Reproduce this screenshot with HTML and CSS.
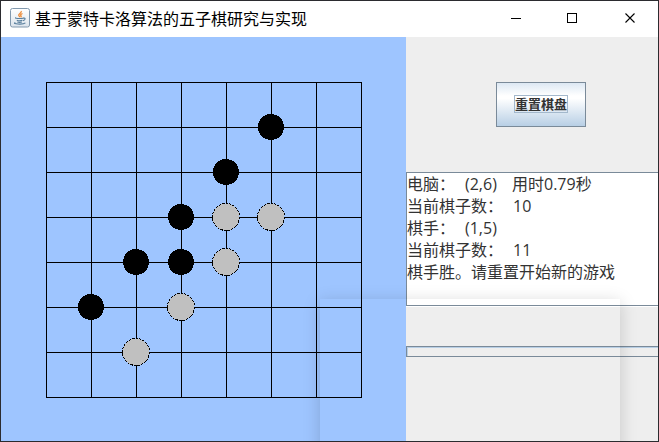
FILE: index.html
```html
<!DOCTYPE html>
<html lang="zh-CN">
<head>
<meta charset="utf-8">
<title>基于蒙特卡洛算法的五子棋研究与实现</title>
<link rel="stylesheet" href="styles.css">
</head>
<body>
<div class="window">
  <header class="titlebar">
    <svg class="app-icon" width="20" height="20" viewBox="0 0 20 20">
      <defs><linearGradient id="tile" x1="0" y1="0" x2="0" y2="1"><stop offset="0" stop-color="#fff"/><stop offset="1" stop-color="#dce4ec"/></linearGradient></defs>
      <rect x=".5" y=".5" width="19" height="18.5" rx="2" fill="url(#tile)" stroke="#8299ae"/>
      <path d="M11.3 3c.5 2-2.8 2.7-2.6 4.2.1.8 1 1.1 1.1 2.1M12.5 5.5c-2 .9-2.2 1.5-1.5 2.3.4.5.2 1-.3 1.4" fill="none" stroke="#ed8a36" stroke-width="1.3"/>
      <path d="M6 9.6c-1.3.5.5.9 3.8.9s4-.4 3-.8M6.8 12.2c2 .7 4.2.6 5.6 0M7.3 14c1.6.5 3.2.5 4.6 0M13.5 10.2c2.3-.5 2.1 1.8-.5 2.4M5.3 14.5c-4 1.6 8 2.4 10.1.4" fill="none" stroke="#587e9c" stroke-width="1.1"/>
    </svg>
    <h1 class="title">基于蒙特卡洛算法的五子棋研究与实现</h1>
    <svg class="controls" width="126" height="11" viewBox="0 0 126 11" fill="none" stroke="#000" shape-rendering="crispEdges">
      <path d="M0 5.5h10"/>
      <rect x="56.5" y=".5" width="9" height="9"/>
      <path d="M114.5.5l9 9M123.5.5l-9 9" stroke-width="1.1" shape-rendering="auto"/>
    </svg>
  </header>
  <main class="content">
    <section class="board-panel">
      <svg class="board" width="316" height="316" viewBox="0 0 316 316">
        <path class="lines" d="M.5 0v316M45.5 0v316M90.5 0v316M135.5 0v316M180.5 0v316M225.5 0v316M270.5 0v316M315.5 0v316M0 .5h316M0 45.5h316M0 90.5h316M0 135.5h316M0 180.5h316M0 225.5h316M0 270.5h316M0 315.5h316"/>
        <g class="black">
          <circle cx="225" cy="45" r="13"/><circle cx="180" cy="90" r="13"/><circle cx="135" cy="135" r="13"/>
          <circle cx="90" cy="180" r="13"/><circle cx="135" cy="180" r="13"/><circle cx="45" cy="225" r="13"/>
        </g>
        <g class="gray">
          <circle cx="180" cy="135" r="13.5"/><circle cx="225" cy="135" r="13.5"/><circle cx="180" cy="180" r="13.5"/>
          <circle cx="135" cy="225" r="13.5"/><circle cx="90" cy="270" r="13.5"/>
        </g>
      </svg>
    </section>
    <aside class="side">
      <button class="reset"><span class="reset-label">重置棋盘</span></button>
      <div class="log">
        <p><span class="who">电脑：</span><span class="move">(2,6)</span><span>用时0.79秒</span></p>
        <p><span class="count">当前棋子数：</span><span>10</span></p>
        <p><span class="who">棋手：</span><span>(1,5)</span></p>
        <p><span class="count">当前棋子数：</span><span>11</span></p>
        <p>棋手胜。请重置开始新的游戏</p>
      </div>
      <div class="field"></div>
    </aside>
  </main>
  <div class="ghost"></div>
</div>
</body>
</html>
```
FILE: styles.css
```css
* { box-sizing: border-box; }
body { margin: 0; font-family: "Noto Sans CJK SC", sans-serif; }
.window {
  position: relative;
  width: 659px;
  height: 442px;
  border: 1px solid #2b2b2f;
  overflow: hidden;
  display: flex;
  flex-direction: column;
  background: #eee;
}
.titlebar {
  height: 36px;
  flex: none;
  display: flex;
  align-items: center;
  background: #fff;
  padding: 0 21px 0 9px;
}
.app-icon { flex: none; margin: 0 5px 2px 0; }
.title {
  margin: 0 0 3px;
  font-size: 16px;
  font-weight: 400;
  line-height: 24px;
  color: #000;
  white-space: nowrap;
}
.controls { margin: 0 0 1px auto; }
.content { flex: 1; display: flex; min-height: 0; }
.board-panel { width: 405px; flex: none; padding: 45px; background: #9ec5ff; }
.board { display: block; }
.lines { stroke: #000; fill: none; shape-rendering: crispEdges; }
.black { fill: #000; shape-rendering: crispEdges; }
.gray { fill: #c0c0c0; stroke: #000; stroke-dasharray: 2.2 1.3; shape-rendering: crispEdges; }
.side { flex: 1; display: flex; flex-direction: column; background: #eee; }
.reset {
  width: 90px;
  height: 45px;
  flex: none;
  margin: 45px 0 0 90px;
  padding: 0 0 1px;
  display: flex;
  align-items: center;
  justify-content: center;
  border: 1px solid #7a8a99;
  background: linear-gradient(#dde8f3 0%, #fff 30%, #fff 36%, #b8cfe5 100%);
  font-family: inherit;
}
.reset-label {
  width: 54px;
  height: 18px;
  border: 1px solid #a3b8cc;
  font-size: 13px;
  line-height: 15px;
  font-weight: 700;
  color: #333;
  white-space: nowrap;
}
.log {
  height: 134px;
  flex: none;
  margin-top: 45px;
  border: solid #7a8a99;
  border-width: 1px 0 1px 1px;
  background: #fff;
  box-shadow: 0 1px #fff;
  font: 16px/22px "Open Sans", "Noto Sans CJK SC", sans-serif;
  color: #333;
}
.log p { margin: 0; display: flex; height: 22px; white-space: nowrap; }
.who { width: 58px; }
.move { width: 47px; }
.count { width: 106px; }
.field {
  height: 11px;
  flex: none;
  margin-top: 40px;
  border: solid #7a8a99;
  border-width: 1px 0 1px 1px;
  box-shadow: inset 1px 1px #b8cfe5;
}
.ghost {
  position: absolute;
  left: 319px;
  top: 298px;
  width: 300px;
  height: 180px;
  box-shadow: 0 3px 16px rgba(0, 0, 0, .17);
  pointer-events: none;
}
```
